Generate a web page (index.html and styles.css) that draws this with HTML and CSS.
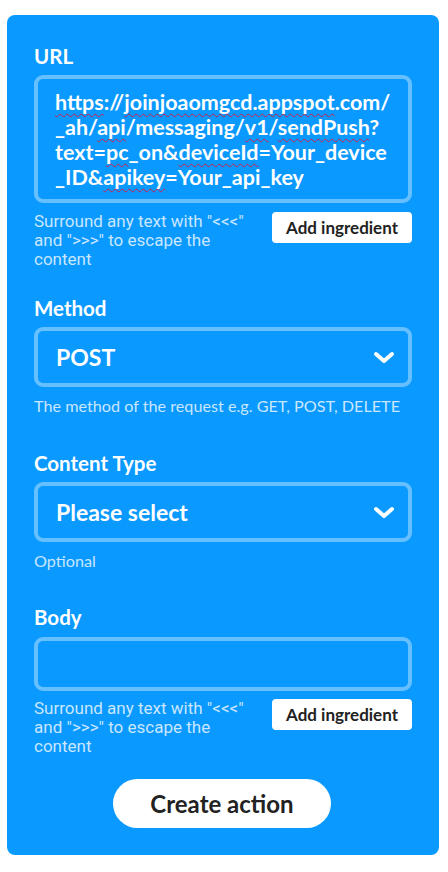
FILE: index.html
```html
<!DOCTYPE html>
<html lang="en">
<head>
<meta charset="utf-8">
<title>Create action</title>
<link rel="stylesheet" href="styles.css">
</head>
<body>
<div class="card">
  <section class="field field-url">
    <div class="label">URL</div>
    <div class="input textarea"><span class="sp">https</span>://<span class="sp">joinjoaomgcd.appspot</span>.com/<br>_ah/<span class="sp">api</span>/messaging/<span class="sp">v1</span>/<span class="sp">sendPush</span>?<br>text=<span class="sp">pc</span>_on&amp;<span class="sp">deviceId</span>=Your_device<br>_ID&amp;<span class="sp">apikey</span>=Your_api_key</div>
    <div class="help-row">
      <p class="help help-escape">Surround any text with "&lt;&lt;&lt;" and "&gt;&gt;&gt;" to escape the content</p>
      <button class="ingredient" type="button">Add ingredient</button>
    </div>
  </section>

  <section class="field field-method">
    <div class="label">Method</div>
    <div class="input select">
      <span class="select-value">POST</span>
      <svg class="chevron" width="22" height="13" viewBox="0 0 22 13"><polyline points="3,3 11,10 19,3" fill="none" stroke="#fff" stroke-width="4" stroke-linecap="round" stroke-linejoin="round"/></svg>
    </div>
    <p class="help help-plain">The method of the request e.g. GET, POST, DELETE</p>
  </section>

  <section class="field field-type">
    <div class="label">Content Type</div>
    <div class="input select">
      <span class="select-value">Please select</span>
      <svg class="chevron" width="22" height="13" viewBox="0 0 22 13"><polyline points="3,3 11,10 19,3" fill="none" stroke="#fff" stroke-width="4" stroke-linecap="round" stroke-linejoin="round"/></svg>
    </div>
    <p class="help help-plain">Optional</p>
  </section>

  <section class="field field-body">
    <div class="label">Body</div>
    <div class="input body-input"></div>
    <div class="help-row">
      <p class="help help-escape">Surround any text with "&lt;&lt;&lt;" and "&gt;&gt;&gt;" to escape the content</p>
      <button class="ingredient" type="button">Add ingredient</button>
    </div>
  </section>

  <div class="actions">
    <button class="create" type="button">Create action</button>
  </div>
</div>
</body>
</html>
```

FILE: styles.css
```css
* { box-sizing: border-box; }

html, body {
  margin: 0;
  padding: 0;
  background: #ffffff;
}

body {
  font-family: Lato, "Noto Sans", sans-serif;
  color: #ffffff;
}

.card {
  margin: 15px 9px 0 7px;
  width: 432px;
  height: 840px;
  background: #0a99ff;
  border-radius: 8px;
  padding: 30px 27px 0 27px;
}

.field { display: flex; flex-direction: column; }

.label {
  font-size: 20.5px;
  font-weight: 700;
  line-height: 22px;
  height: 22px;
  margin-bottom: 8px;
}

.input {
  border: 4px solid #66c0ff;
  border-radius: 9px;
}

.textarea {
  height: 128px;
  padding: 11px 8px 9px 17px;
  font-size: 21.5px;
  font-weight: 700;
  line-height: 25px;
  white-space: nowrap;
  overflow: hidden;
}

.sp {
  text-decoration: underline wavy #c8204a;
  text-decoration-thickness: 1px;
  text-underline-offset: 3px;
  text-decoration-skip-ink: none;
}

.select {
  height: 60px;
  display: flex;
  align-items: center;
  justify-content: space-between;
  padding: 0 13px 0 18px;
}

.select-value {
  font-size: 23px;
  font-weight: 700;
  line-height: 26px;
}

.chevron { display: block; margin-top: 1px; }

.body-input { height: 54px; margin-top: 1px; }

.help {
  margin: 0;
  font-size: 16.2px;
  line-height: 19px;
  color: rgba(255, 255, 255, 0.78);
}

.help-escape {
  font-family: Roboto, "Liberation Sans", sans-serif;
  font-size: 17px;
  width: 228px;
}

.help-plain { margin-top: 9.5px; }

.help-row {
  display: flex;
  justify-content: space-between;
  align-items: flex-start;
  margin-top: 8px;
}

.field-url .help-row { margin-top: 9px; }

.ingredient {
  width: 140px;
  height: 31px;
  margin: 0;
  padding: 0;
  border: none;
  border-radius: 4px;
  background: #ffffff;
  color: #222222;
  font-family: Lato, "Noto Sans", sans-serif;
  font-size: 17px;
  font-weight: 700;
  flex-shrink: 0;
}

.field-url { margin-bottom: 27.5px; }
.field-method { margin-bottom: 36.5px; }
.field-type { margin-bottom: 36px; }

.actions {
  display: flex;
  justify-content: center;
  margin-top: 22.5px;
  padding-right: 2px;
}

.create {
  width: 218px;
  height: 49px;
  border: none;
  border-radius: 25px;
  background: #ffffff;
  color: #222222;
  font-family: Lato, "Noto Sans", sans-serif;
  font-size: 24px;
  font-weight: 700;
  padding: 0;
}
```
